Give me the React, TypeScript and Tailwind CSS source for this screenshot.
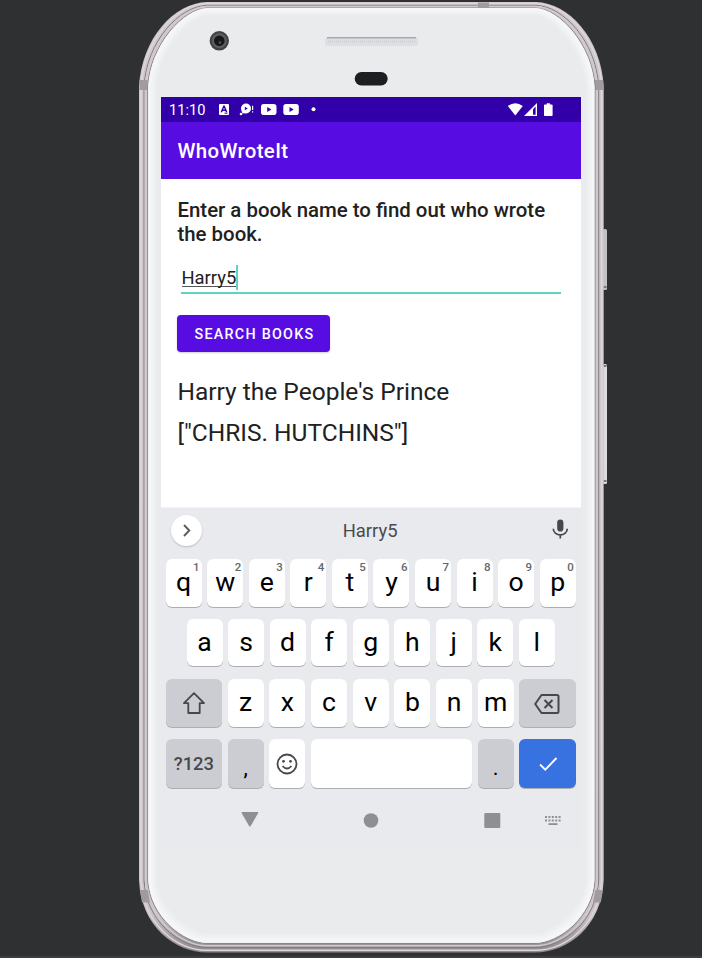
import type { ReactNode } from "react";

const topRow = ["q", "w", "e", "r", "t", "y", "u", "i", "o", "p"];
const homeRow = ["a", "s", "d", "f", "g", "h", "j", "k", "l"];
const bottomRow = ["z", "x", "c", "v", "b", "n", "m"];

function Key({ children, className = "bg-white", hint }: { children?: ReactNode; className?: string; hint?: string }) {
  return (
    <div
      className={`relative flex h-full items-center justify-center rounded-[6px] text-[26.6px] leading-none text-black shadow-[0_1px_0_#acaeb2] ${className}`}
    >
      {children}
      {hint && <span className="absolute top-[3px] right-[2px] text-[11.5px] leading-none font-medium text-[#66676a]">{hint}</span>}
    </div>
  );
}

function Letter({ char }: { char: string }) {
  return <span>{char}</span>;
}

function StatusBar() {
  return (
    <div className="flex h-[25px] items-center bg-[#3200a9] pl-[8px] text-white">
      <span className="mt-[2px] w-[50px] text-[14.6px] leading-none">11:10</span>
      <svg className="h-[25px] w-[100px]" viewBox="0 0 100 25" fill="currentColor">
        <rect x="0" y="7" width="10" height="11" rx="1" />
        <path d="M5 8.8 2.3 15.2M5 8.8l2.7 6.4M3.4 13.2h3.4" stroke="#3200a9" strokeWidth="1.5" fill="none" />
        <path d="M5.5 16.2h3" stroke="#3200a9" strokeWidth="1" />
        <circle cx="27" cy="11.5" r="5" />
        <path d="M22.5 14 23.500 16.500 28 16z" />
        <circle cx="22" cy="17" r="1.300" />
        <path d="M25.8 9.8v3.4l3-1.7z" fill="#3200a9" />
        <path d="M33 8.8h1.2v4.2H33zM33 14.2h1.2v1.4H33z" />
        <rect x="42" y="7" width="15.5" height="11" rx="2.8" />
        <path d="M48.2 10v5l4.2-2.5z" fill="#3200a9" />
        <rect x="64.3" y="7" width="15.5" height="11" rx="2.8" />
        <path d="M70.5 10v5l4.2-2.5z" fill="#3200a9" />
        <circle cx="94.5" cy="12.2" r="2" />
      </svg>
      <svg className="mr-[26px] ml-auto h-[25px] w-[48px]" viewBox="0 0 48 25" fill="currentColor">
        <path d="M.8 9Q8.3 3.5 15.8 9L8.300 18.4z" />
        <path d="M17 19 30 6v13z" />
        <path d="M26 12.2l2.6-2.6v8.2H26z" fill="#3200a9" />
        <path d="M37.8 7.500h1.900V6.200h3.200V7.500h1.900q.8 0 .8.8v9.900q0 .8-.8.8h-7q-.8 0-.8-.8V8.300q0-.8.8-.8z" />
      </svg>
    </div>
  );
}

function BookSearch() {
  return (
    <div className="h-[328px] bg-white pt-[19px] pr-[15px] pl-[16.500px] text-[#212121]">
      <p className="text-[20.4px] leading-[24px] font-medium">
        Enter a book name to find out who wrote
        <br />
        the book.
      </p>
      <div className="mt-[14px] ml-[3.500px] flex h-[34px] w-[380px] items-start border-b-2 border-[#5fd3c2] pt-[5px]">
        <span className="mt-[1px] ml-[0.500px] h-[21px] border-b border-[#555] text-[18.4px] leading-[24px]">Harry5</span>
        <span className="h-[25px] w-[2px] bg-[#5fd3c2]" />
      </div>
      <button className="mt-[21px] -ml-[0.500px] flex h-[37px] w-[153px] items-center justify-center rounded-[4px] bg-[#570de1] pt-[2px] pl-[2px] text-[14.3px] font-medium tracking-[1.28px] text-white shadow-[0_1px_2px_#0003]">
        SEARCH BOOKS
      </button>
      <p className="mt-[25px] text-[24.5px] leading-[29px]">Harry the People&apos;s Prince</p>
      <p className="mt-[12px] text-[24.5px] leading-[29px]">[&quot;CHRIS. HUTCHINS&quot;]</p>
    </div>
  );
}

function Keyboard() {
  return (
    <div className="h-[341px] bg-[#e8eaee] pr-[5.300px] pl-[4.700px]">
      <div className="-mr-[5.300px] -ml-[4.700px] h-px bg-[#f4f4f5]" />
      <div className="flex h-[51px] items-center justify-between pr-[6.500px] pl-[5.300px]">
        <div className="mt-[-7px] flex size-[31px] items-center justify-center rounded-full bg-white shadow-[0_1px_2px_#0003]">
          <svg className="size-[31px]" viewBox="0 0 31 31" fill="none" stroke="#5b5c60" strokeWidth="1.9">
            <path d="m13 10 5.3 5.500L13 21" />
          </svg>
        </div>
        <span className="-mt-[5px] ml-[-13px] text-[18.4px] text-[#4a4b4f]">Harry5</span>
        <svg className="mt-[-9px] h-[20px] w-[18px]" viewBox="0 0 18 20" fill="none">
          <rect x="6.200" y="0.500" width="6.200" height="12" rx="3.100" fill="#47484b" />
          <path d="M2.300 9.700a7 6.200 0 0 0 14 0M9.300 15.800V19.500" stroke="#47484b" strokeWidth="1.700" />
        </svg>
      </div>
      <div className="flex flex-col gap-[12.400px]">
        <div className="grid h-[47.500px] grid-cols-10 gap-[5.600px]">
          {topRow.map((c, i) => (
            <Key key={c} hint={String((i + 1) % 10)}>
              <Letter char={c} />
            </Key>
          ))}
        </div>
        <div className="grid h-[47.500px] grid-cols-9 gap-[5.600px] px-[20.900px]">
          {homeRow.map((c) => (
            <Key key={c}>
              <Letter char={c} />
            </Key>
          ))}
        </div>
        <div className="grid h-[48px] grid-cols-[56.400px_repeat(7,1fr)_56.400px] gap-[5.600px]">
          <Key className="bg-[#cccdd2]">
            <svg className="h-[24px] w-[24px]" viewBox="0 0 24 24" fill="none" stroke="#47484b" strokeWidth="1.800" strokeLinejoin="round">
              <path d="M12 2.200 22 12.200h-4.300V22H6.300v-9.800H2z" />
            </svg>
          </Key>
          {bottomRow.map((c) => (
            <Key key={c}>
              <Letter char={c} />
            </Key>
          ))}
          <Key className="bg-[#cccdd2]">
            <svg className="mt-[2px] h-[22px] w-[28px]" viewBox="0 0 28 22" fill="none" stroke="#47484b" strokeWidth="2" strokeLinejoin="round">
              <path d="M8.500 2H24q1.500 0 1.500 1.500v15q0 1.500-1.500 1.500H8.500L2.200 11z" />
              <path d="m11.500 7 8 8m0-8-8 8" />
            </svg>
          </Key>
        </div>
        <div className="grid h-[48.500px] grid-cols-[56.400px_36px_36px_1fr_36px_56.400px] gap-[5.600px]">
          <Key className="bg-[#cccdd2]">
            <span className="mt-[2px] text-[18.400px] font-medium text-[#47484b]">?123</span>
          </Key>
          <Key className="bg-[#cccdd2]">
            <span className="mt-[10px] text-[22px]">,</span>
          </Key>
          <Key>
            <svg className="mt-px size-[22px]" viewBox="0 0 22 22" fill="none" stroke="#47484b" strokeWidth="1.800">
              <circle cx="11" cy="11" r="9.500" />
              <path d="M6.500 13q4.500 5 9 0" />
              <circle cx="7.500" cy="8.300" r="1.400" fill="#47484b" stroke="none" />
              <circle cx="14.500" cy="8.300" r="1.400" fill="#47484b" stroke="none" />
            </svg>
          </Key>
          <Key />
          <Key className="bg-[#cccdd2]">
            <span className="mt-[10px] text-[22px]">.</span>
          </Key>
          <Key className="bg-[#3871e0]">
            <svg className="mt-px h-[16px] w-[20px]" viewBox="0 0 20 16" fill="none" stroke="white" strokeWidth="1.900">
              <path d="m2 8.500 5.300 5.200L18.500 2" />
            </svg>
          </Key>
        </div>
      </div>
      <svg className="mt-[20px] h-[24px] w-[410px]" viewBox="0 0 410 24" fill="#8e8f92">
        <path d="M76.200 4h15.500q1 0 .5 1l-7.500 13q-.8 1.200-1.600 0L75.600 5q-.4-1 .6-1z" />
        <circle cx="205" cy="12.500" r="7.300" />
        <rect x="318.300" y="5" width="16" height="15" rx="1" />
        <path d="M379 9h16M379 12.500h16" stroke="#8e8f92" strokeWidth="2" strokeDasharray="2 1.400" />
        <path d="M382.500 15.200h9v1.800h-9z" />
      </svg>
    </div>
  );
}

/** Rounded phone silhouette, pulled in from the outer edge by dx and dy. */
function outline(dx: number, dy: number) {
  const l = 139 + dx;
  const r = 603.7 - dx;
  const t = 2 + dy;
  const b = 952.5 - dy * 1.5;
  return [
    `M207 ${t}H536`,
    `C${r - 35} ${t + 1} ${r - 3} ${t + 36} ${r} 86`,
    `V880`,
    `C${r - 2} ${b - 26} ${r - 36} ${b} 535 ${b}`,
    `H207`,
    `C${l + 36} ${b} ${l + 2} ${b - 26} ${l} 880`,
    `V86`,
    `C${l + 3} ${t + 36} ${l + 35} ${t + 1} 207 ${t}Z`,
  ].join("");
}

function PhoneHardware() {
  return (
    <svg className="absolute inset-0 size-full" viewBox="0 0 702 958" fill="none">
      <rect x="603" y="229" width="4" height="61" rx="1.500" fill="#bfc3c4" />
      <rect x="603" y="364" width="4" height="120" rx="1.500" fill="#dadddd" />
      <path d="M603.500 287h3M603.500 366h3M603.500 481h3" stroke="#777" strokeWidth="2" />
      <defs>
        <linearGradient id="metal" x1="0" y1="0" x2="0" y2="1">
          <stop offset="0" stopColor="#cfc8ca" />
          <stop offset=".96" stopColor="#cbc4c7" />
          <stop offset="1" stopColor="#8e878b" />
        </linearGradient>
      </defs>
      <path d={outline(0, 0)} fill="url(#metal)" />
      <path d={outline(2, 1.5)} stroke="#ddd7d9" strokeWidth="1.500" />
      <path d={outline(5, 3.3)} stroke="#827c82" strokeWidth="1" />
      <path d={outline(6.5, 4.5)} stroke="#d0cacd" strokeWidth="1.500" />
      <path d="M478 2.500h11v5h-11zM139.500 80h8v10h-8zM595 80h8.200v10H595zM139.700 890h8l2.300 12.500h-8zM595.300 890h7.700l-2.200 12.500H593z" fill="#a19a9f" />
      <path d={outline(8.7, 6)} fill="#eaebed" stroke="#89838a" strokeWidth="1" />
      <path d={outline(15, 11)} stroke="#eeeff1" strokeWidth="4" />
      <path d={outline(12.5, 9)} stroke="#f2f3f5" strokeWidth="4" />
      <path d={outline(10.7, 7.5)} stroke="#f5f6f8" strokeWidth="3" />
      <circle cx="219.300" cy="40.800" r="9.700" fill="#404244" />
      <circle cx="219.300" cy="40.800" r="7.500" fill="#5c5e61" />
      <circle cx="219.300" cy="40.800" r="5.300" fill="#15171a" />
      <circle cx="220" cy="42.500" r="1.300" fill="#5f5a36" />
      <rect x="325" y="37" width="93" height="9" rx="3" fill="#dedfe4" />
      <path d="M327 37.800h89" stroke="#a7a8b0" strokeWidth="1.600" />
      <path d="M328 41.500h87" stroke="#d4d5da" strokeWidth="3" strokeDasharray="1 1" />
      <rect x="354.700" y="72" width="33" height="13.500" rx="6.700" fill="#1c1e22" />
    </svg>
  );
}

export default function App() {
  return (
    <main className="relative h-[958px] w-[702px] overflow-hidden border-b-2 border-[#3d3d3f] bg-[#2e3032] pt-[97px] pl-[161px] font-['Roboto',sans-serif]">
      <div className="absolute inset-x-0 top-0 h-[958px]">
        <PhoneHardware />
      </div>
      <div className="relative w-[420px]">
        <StatusBar />
        <header className="flex h-[57px] items-center bg-[#570de1] pt-[2px] pl-[16.500px] text-[20.400px] font-medium tracking-[0.350px] text-white">
          WhoWroteIt
        </header>
        <BookSearch />
        <Keyboard />
      </div>
    </main>
  );
}
